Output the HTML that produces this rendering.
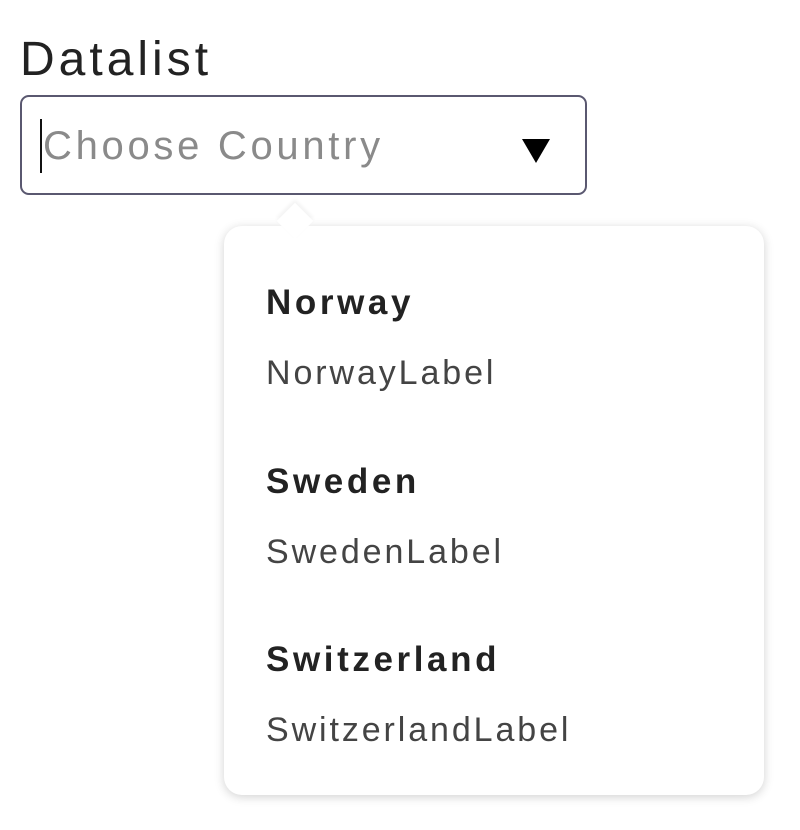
<!DOCTYPE html>
<html><head><style>
body{margin:0;width:800px;height:830px;background:#fff;font-family:"Liberation Sans",sans-serif;position:relative;overflow:hidden}
.lbl{position:absolute;left:20px;top:30px;font-size:48px;color:#222;line-height:60px;letter-spacing:4px}
.inp{position:absolute;left:20px;top:95px;width:563px;height:96px;border:2px solid #5a5870;border-radius:9px;box-sizing:content-box}
.ph{position:absolute;left:21px;top:24px;font-size:40px;color:#8a8a8a;line-height:50px;letter-spacing:3.7px}
.caret{position:absolute;left:18px;top:22px;width:2px;height:54px;background:#111}
.tri{position:absolute;left:500px;top:42px;width:0;height:0;border-left:14px solid transparent;border-right:14px solid transparent;border-top:24px solid #000}
.pop{position:absolute;left:224px;top:226px;width:540px;height:569px;background:#fff;border-radius:18px;box-shadow:0 2px 10px rgba(0,0,0,.18)}
.notch{position:absolute;left:282px;top:208px;width:26px;height:26px;background:#fff;transform:rotate(45deg);box-shadow:-2px -2px 4px rgba(0,0,0,.06)}
.it{position:absolute;left:266px;font-size:34px;line-height:40px}
.b{font-weight:bold;color:#222;font-size:35px;letter-spacing:3.6px}
.s{color:#444;letter-spacing:2.9px}
</style></head><body>
<div class="lbl">Datalist</div>
<div class="inp"><div class="caret"></div><div class="ph">Choose Country</div><div class="tri"></div></div>
<div class="pop"></div>
<div class="notch"></div>
<div class="it b" style="top:283px">Norway</div>
<div class="it s" style="top:353px">NorwayLabel</div>
<div class="it b" style="top:462px">Sweden</div>
<div class="it s" style="top:532px">SwedenLabel</div>
<div class="it b" style="top:640px">Switzerland</div>
<div class="it s" style="top:710px">SwitzerlandLabel</div>
</body></html>
